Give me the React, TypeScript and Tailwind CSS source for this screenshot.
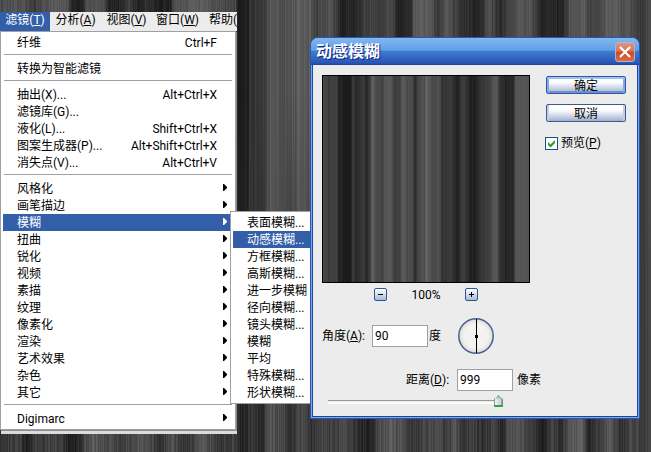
import React, { useState } from 'react'
import clsx from 'clsx'

interface MenuEntry {
  readonly label: string;
  readonly shortcut?: string;
  readonly hasSubmenu?: boolean;
}

/** Brightness samples of the fibre texture, as [x, grey level] */
type ToneSamples = readonly (readonly [number, number])[]

const MENU_BAR: readonly (readonly [string, string])[] = [
  ['滤镜', 'T'],
  ['分析', 'A'],
  ['视图', 'V'],
  ['窗口', 'W'],
]

const FILTER_GROUPS: readonly (readonly MenuEntry[])[] = [
  [{ label: '纤维', shortcut: 'Ctrl+F' }],
  [{ label: '转换为智能滤镜' }],
  [
    { label: '抽出(X)...', shortcut: 'Alt+Ctrl+X' },
    { label: '滤镜库(G)...' },
    { label: '液化(L)...', shortcut: 'Shift+Ctrl+X' },
    { label: '图案生成器(P)...', shortcut: 'Alt+Shift+Ctrl+X' },
    { label: '消失点(V)...', shortcut: 'Alt+Ctrl+V' },
  ],
  [
    { label: '风格化', hasSubmenu: true },
    { label: '画笔描边', hasSubmenu: true },
    { label: '模糊', hasSubmenu: true },
    { label: '扭曲', hasSubmenu: true },
    { label: '锐化', hasSubmenu: true },
    { label: '视频', hasSubmenu: true },
    { label: '素描', hasSubmenu: true },
    { label: '纹理', hasSubmenu: true },
    { label: '像素化', hasSubmenu: true },
    { label: '渲染', hasSubmenu: true },
    { label: '艺术效果', hasSubmenu: true },
    { label: '杂色', hasSubmenu: true },
    { label: '其它', hasSubmenu: true },
  ],
  [{ label: 'Digimarc', hasSubmenu: true }],
]

const BLUR_ITEMS: readonly string[] = [
  '表面模糊...',
  '动感模糊...',
  '方框模糊...',
  '高斯模糊...',
  '进一步模糊',
  '径向模糊...',
  '镜头模糊...',
  '模糊',
  '平均',
  '特殊模糊...',
  '形状模糊...',
]

const CANVAS_TOP: ToneSamples = [
  [0, 72], [20, 84], [34, 58], [44, 82], [56, 90], [68, 82], [72, 32], [82, 36], [86, 78], [104, 76],
  [108, 36], [122, 40], [128, 66], [134, 38], [148, 48], [158, 30], [170, 34], [174, 84], [206, 88],
  [228, 66], [235, 70], [237, 30], [248, 32], [249, 52], [256, 54], [264, 62], [270, 88], [284, 80],
  [300, 94], [310, 90], [314, 66], [330, 84], [341, 36], [356, 38], [364, 66], [378, 62], [392, 76],
  [396, 38], [411, 38], [413, 92], [430, 90], [437, 58], [445, 86], [462, 44], [480, 38], [488, 80],
  [500, 44], [515, 80], [530, 82], [541, 38], [562, 34], [570, 84], [584, 90], [590, 62], [610, 92],
  [624, 84], [634, 70], [640, 54], [651, 76],
]

const CANVAS_BOTTOM: ToneSamples = [
  [0, 52], [18, 66], [25, 32], [36, 58], [50, 62], [60, 66], [64, 46], [71, 30], [79, 40], [84, 70],
  [92, 88], [108, 72], [120, 62], [136, 80], [150, 72], [160, 50], [172, 78], [184, 50], [192, 64],
  [200, 86], [210, 74], [220, 50], [234, 66], [241, 34], [252, 52], [262, 40], [270, 84], [283, 70],
  [290, 54], [304, 76], [311, 46], [318, 70], [330, 62], [342, 72], [350, 66], [356, 48], [370, 30],
  [378, 72], [390, 88], [400, 76], [412, 60], [424, 66], [436, 74], [446, 58], [455, 86], [462, 50],
  [472, 66], [482, 46], [492, 70], [502, 38], [508, 78], [520, 84], [528, 58], [543, 34], [552, 64],
  [560, 46], [570, 88], [580, 98], [588, 46], [600, 60], [608, 88], [616, 64], [620, 42], [630, 72],
  [642, 60], [651, 62],
]

const PREVIEW_TONES: ToneSamples = [
  [0, 74], [5, 60], [13, 66], [15, 38], [25, 28], [27, 30], [29, 56], [33, 44], [40, 60], [43, 34],
  [47, 70], [49, 94], [53, 74], [58, 68], [63, 86], [68, 84], [71, 62], [76, 62], [79, 92], [82, 80],
  [89, 76], [91, 42], [94, 72], [101, 80], [103, 96], [106, 84], [110, 72], [115, 80], [119, 54],
  [127, 56], [134, 32], [138, 60], [142, 52], [147, 34], [152, 34], [157, 54], [166, 66], [171, 84],
  [173, 92], [176, 48], [182, 38], [190, 44], [192, 80], [200, 88], [207, 80],
]

/**
 * Interpolates the samples for one pixel column and adds a fixed grain
 */
function toneAt(samples: ToneSamples, x: number, strength: number): number {
  const next = samples.findIndex(([sx]) => sx > x)
  const end = next === -1 ? samples.length - 1 : Math.max(next, 1)
  const [x0, g0] = samples[end - 1]
  const [x1, g1] = samples[end]
  const base = g0 + ((g1 - g0) * (x - x0)) / (x1 - x0)
  let hash = Math.imul(x + samples.length * 131, 0x9e3779b1)
  hash = Math.imul(hash ^ (hash >>> 15), 0x85ebca6b)
  hash = (hash ^ (hash >>> 13)) >>> 0
  const grain = (hash / 0xffffffff - 0.5) * strength
  return Math.round(Math.min(110, Math.max(26, base + grain)))
}

interface FibresProps {
  readonly samples: ToneSamples;
  readonly width: number;
  readonly strength: number;
}

/**
 * Vertical fibre streaks, one rect for each pixel column
 */
function Fibres({ samples, width, strength }: FibresProps): React.JSX.Element {
  return (
    <>
      {Array.from({ length: width }, (_, x) => {
        const tone = toneAt(samples, x, strength)
        return <rect key={x} x={x} y={0} width={1} height={100} fill={`rgb(${tone},${tone},${tone})`} />
      })}
    </>
  )
}

function Canvas(): React.JSX.Element {
  return (
    <svg
      className="absolute inset-0 w-full h-full"
      viewBox="0 0 651 100"
      preserveAspectRatio="none"
      shapeRendering="crispEdges"
      aria-hidden="true"
    >
      <defs>
        <linearGradient id="fade" x1="0" y1="0" x2="0" y2="1">
          <stop offset="0.2" stopColor="black" />
          <stop offset="0.9" stopColor="white" />
        </linearGradient>
        <mask id="fadeMask">
          <rect width="651" height="100" fill="url(#fade)" />
        </mask>
      </defs>
      <Fibres samples={CANVAS_TOP} width={651} strength={18} />
      <g mask="url(#fadeMask)">
        <Fibres samples={CANVAS_BOTTOM} width={651} strength={24} />
      </g>
    </svg>
  )
}

function SubmenuArrow(): React.JSX.Element {
  return (
    <svg className="absolute right-1.5 top-1 w-1 h-[7px]" viewBox="0 0 4 7" fill="currentColor" aria-hidden="true">
      <path d="M0 0h1l3 3v1l-3 3H0z" />
    </svg>
  )
}

function MenuBar(): React.JSX.Element {
  return (
    <nav className="flex h-[19px] leading-[17px] bg-[#ececec] whitespace-nowrap">
      {MENU_BAR.map(([label, key], index) => (
        <button
          key={key}
          className={clsx('shrink-0 pb-0.5', index === 0 ? 'w-[50px] bg-[#335ea8] text-white' : 'w-[51px]')}
        >
          {label}(<u>{key}</u>)
        </button>
      ))}
      <button className="shrink-0 pl-1.5 pb-0.5">帮助(</button>
    </nav>
  )
}

function FilterMenu(): React.JSX.Element {
  return (
    <div className="relative bg-white border border-[#a0a0a4] p-0.5 mr-px shadow-[1px_1px_0_#8c8c8c,1px_4px_0_#dcdcdc]">
      {FILTER_GROUPS.map((group, index) => (
        <div key={index}>
          {index > 0 && <hr className="mt-[3px] mb-[5px] mx-px border-t border-[#a0a0a4]" />}
          {group.map(({ label, shortcut, hasSubmenu }) => (
            <button
              key={label}
              className={clsx(
                'relative flex justify-between w-full h-[17px] leading-[19px] pl-[14px] pr-4 whitespace-nowrap',
                label === '模糊' && 'bg-[#335ea8] text-white'
              )}
            >
              <span>{label}</span>
              {shortcut && <span>{shortcut}</span>}
              {hasSubmenu && <SubmenuArrow />}
            </button>
          ))}
        </div>
      ))}
      <BlurSubmenu />
    </div>
  )
}

function BlurSubmenu(): React.JSX.Element {
  return (
    <div className="absolute left-[229px] top-[179px] w-28 bg-white border border-[#a0a0a4] p-0.5">
      {BLUR_ITEMS.map((label) => (
        <button
          key={label}
          className={clsx(
            'block w-full h-[17px] leading-[19px] pl-[14px] text-left whitespace-nowrap',
            label === '动感模糊...' && 'bg-[#335ea8] text-white'
          )}
        >
          {label}
        </button>
      ))}
    </div>
  )
}

function ZoomButton({ label, path }: { label: string; path: string }): React.JSX.Element {
  return (
    <button
      aria-label={label}
      className="w-[13px] h-[13px] border border-[#2f5593] rounded-[2px] bg-linear-to-b from-white to-[#a9bbd8]"
    >
      <svg viewBox="0 0 11 11" className="w-[11px] h-[11px]" aria-hidden="true" shapeRendering="crispEdges">
        <path d={path} fill="black" />
      </svg>
    </button>
  )
}

function PreviewPane(): React.JSX.Element {
  return (
    <div className="w-[208px]">
      <svg
        className="block w-full h-[208px] border border-black"
        viewBox="0 0 206 100"
        preserveAspectRatio="none"
        shapeRendering="crispEdges"
        role="img"
      >
        <Fibres samples={PREVIEW_TONES} width={206} strength={12} />
      </svg>
      <div className="flex items-center justify-center gap-6 h-[13px] mt-[5px]">
        <ZoomButton label="缩小" path="M3 5h5v1H3z" />
        <span className="w-[30px] text-center leading-4">100%</span>
        <ZoomButton label="放大" path="M3 5h5v1H3zM5 3h1v5H5z" />
      </div>
    </div>
  )
}

function AngleDial(): React.JSX.Element {
  return (
    <svg className="w-9 h-9" viewBox="0 0 36 36" aria-hidden="true">
      <defs>
        <radialGradient id="dial">
          <stop offset="0.7" stopColor="#f4f3f1" />
          <stop offset="1" stopColor="#dcdad6" />
        </radialGradient>
      </defs>
      <circle cx="18" cy="18" r="17.2" fill="url(#dial)" stroke="#4a5f95" strokeWidth="1.5" />
      <path d="M18 1h1v34h-1zM17 17h3v3h-3z" fill="black" shapeRendering="crispEdges" />
    </svg>
  )
}

const BUTTON_CLASS =
  'block w-20 h-[18px] leading-[18px] rounded-[2px] border bg-[linear-gradient(#fff_30%,#e6ebf3_50%,#9fb0cc)]'

const FIELD_CLASS = 'w-14 h-[22px] px-0.5 bg-white border border-[#a0a0a4] outline-none'

/**
 * Motion blur dialog with preview, angle and distance settings
 */
function MotionBlurDialog(): React.JSX.Element {
  const [preview, setPreview] = useState<boolean>(true)
  const [angle, setAngle] = useState<string>('90')
  const [distance, setDistance] = useState<string>('999')

  return (
    <section className="absolute left-[310px] top-[37px] w-[330px] rounded-t-lg border border-[#2a55b8] bg-[#76aae6] overflow-hidden">
      <header className="flex items-center justify-between h-[27px] pl-[5px] pr-1 bg-[linear-gradient(#82b8f0,#5f9fe6_45%,#3c7cd0_50%,#2a57b4_92%,#1f3f97)]">
        <h1 className="text-base leading-[26px] font-bold text-white [text-shadow:1px_1px_0_#10208a]">动感模糊</h1>
        <button
          aria-label="关闭"
          className="grid place-items-center w-5 h-5 rounded-[3px] border border-[#a9b3dc] bg-[linear-gradient(#dc9583,#d8755c_45%,#d4451c_50%,#dc6a45)]"
        >
          <svg className="w-3 h-3" viewBox="0 0 12 12" aria-hidden="true">
            <path d="M1 1l10 10M11 1L1 11" stroke="white" strokeWidth="2.2" />
          </svg>
        </button>
      </header>

      <div className="mx-px mb-px pt-2.5 pb-[9px] px-[9px] bg-[#ececec] border border-t-0 border-[#20459c]">
        <div className="flex gap-[15px]">
          <PreviewPane />
          <div className="pt-px">
            <button
              className={clsx(
                BUTTON_CLASS,
                'ml-px border-[#2d56b0] shadow-[inset_0_2px_0_#9dc0f0,inset_2px_0_0_#86a8de,inset_-2px_0_0_#86a8de,inset_0_-2px_0_#6f90cc]'
              )}
            >
              确定
            </button>
            <button
              className={clsx(
                BUTTON_CLASS,
                'ml-px mt-2.5 border-[#3c5a8c] shadow-[inset_2px_0_0_#c3cfe2,inset_-2px_0_0_#c3cfe2]'
              )}
            >
              取消
            </button>
            <label className="flex items-center gap-[3px] mt-3 h-[18px]">
              <span className="grid">
                <input
                  type="checkbox"
                  checked={preview}
                  onChange={(e) => setPreview(e.target.checked)}
                  className="[grid-area:1/1] appearance-none w-[13px] h-[13px] bg-white border border-[#1c5180]"
                />
                {preview && (
                  <svg className="[grid-area:1/1] w-[13px] h-[13px] pointer-events-none" viewBox="0 0 13 13" aria-hidden="true">
                    <path d="M3 5v3l2.5 2.5L10 6V3L5.5 7.5z" fill="#21a121" />
                  </svg>
                )}
              </span>
              <span>预览(<u>P</u>)</span>
            </label>
          </div>
        </div>

        <div className="flex items-center h-9 mt-[17px]">
          <label htmlFor="angle" className="w-[50px]">角度(<u>A</u>):</label>
          <input id="angle" className={FIELD_CLASS} value={angle} onChange={(e) => setAngle(e.target.value)} />
          <span className="w-[30px] pl-px">度</span>
          <AngleDial />
        </div>

        <div className="flex items-center h-[22px] mt-[15px] pl-[84px]">
          <label htmlFor="distance" className="w-[51px]">距离(<u>D</u>):</label>
          <input id="distance" className={FIELD_CLASS} value={distance} onChange={(e) => setDistance(e.target.value)} />
          <span className="pl-1">像素</span>
        </div>

        <input
          type="range"
          aria-label="距离"
          min={1}
          max={999}
          value={Number(distance) || 1}
          onChange={(e) => setDistance(e.target.value)}
          className="block appearance-none w-[175px] h-3 mt-1 ml-1.5 bg-[linear-gradient(#9a9a96_1px,#e3dfd3_1px,#fbfaf5_2px,#fff_4px)] bg-[length:100%_4px] bg-[position:0_5px] bg-no-repeat [&::-webkit-slider-thumb]:appearance-none [&::-webkit-slider-thumb]:w-[9px] [&::-webkit-slider-thumb]:h-3 [&::-webkit-slider-thumb]:[clip-path:polygon(50%_0,100%_35%,100%_100%,0_100%,0_35%)] [&::-webkit-slider-thumb]:bg-[linear-gradient(transparent_83%,#2fa53a_83%),linear-gradient(#4fb45a,transparent_40%),linear-gradient(90deg,#7f97a5_1px,#f2f2f6_1px,#cfcfdc_7px,#6f8a98_8px)]"
        />
      </div>
    </section>
  )
}

export default function App(): React.JSX.Element {
  return (
    <main className="relative min-h-screen overflow-hidden text-xs text-black font-[Roboto,'Noto_Sans_CJK_SC',sans-serif]">
      <Canvas />
      <div className="relative w-[237px] pt-3">
        <MenuBar />
        <FilterMenu />
      </div>
      <MotionBlurDialog />
    </main>
  )
}
